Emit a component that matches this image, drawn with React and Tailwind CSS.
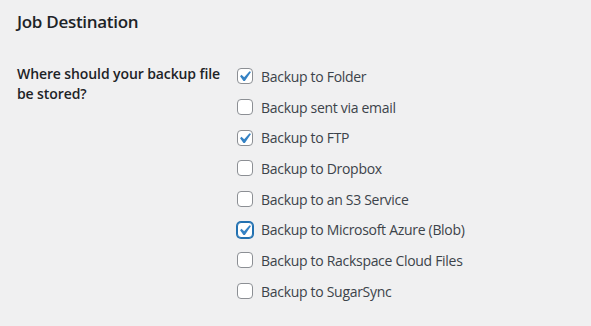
import { useState } from "react"

const DESTINATIONS = [
  { id: "folder",    label: "Backup to Folder",                checked: true },
  { id: "email",     label: "Backup sent via email",           checked: false },
  { id: "ftp",       label: "Backup to FTP",                   checked: true },
  { id: "dropbox",   label: "Backup to Dropbox",               checked: false },
  { id: "s3",        label: "Backup to an S3 Service",         checked: false },
  { id: "azure",     label: "Backup to Microsoft Azure (Blob)", checked: true, focus: true },
  { id: "rackspace", label: "Backup to Rackspace Cloud Files", checked: false },
  { id: "sugarsync", label: "Backup to SugarSync",             checked: false },
]

// ── WP-style checkbox ─────────────────────────────────────────────
function Checkbox({ checked, focus, onChange }) {
  return (
    <span
      onClick={onChange}
      className={
        "relative block h-4 w-4 shrink-0 rounded-[4px] bg-white cursor-pointer " +
        (focus ? "border border-[#2271b1] shadow-[0_0_0_1px_#2271b1]" : "border border-[#8c8f94]")
      }
    >
      {checked && (
        <svg viewBox="0 0 20 20" className="absolute -left-[4px] -top-[3px] h-[21px] w-[21px]">
          <path d="M14.83 4.89l1.34.94-5.81 8.38H9.02L5.78 9.67l1.34-1.25 2.57 2.4z" fill="#3582c4" />
        </svg>
      )}
    </span>
  )
}

export default function App() {
  const [items, setItems] = useState(DESTINATIONS)

  function toggle(id) {
    setItems(arr => arr.map(it => it.id === id ? { ...it, checked: !it.checked } : it))
  }

  return (
    <div className="h-[326px] w-[591px] bg-[#f0f0f1] pl-[17px] pt-[9px] font-['Segoe_UI','Open_Sans',sans-serif] text-[#3c434a]">
      <h2 className="text-[17px] font-semibold leading-[26px] tracking-[-0.3px] text-[#1d2327]">Job Destination</h2>

      <div className="mt-[26px] flex">
        <div className="w-[220px] pt-[3px] text-[14px] font-semibold leading-[20px] tracking-[-0.1px] text-[#1d2327]">
          Where should your backup file be stored?
        </div>
        <div className="flex flex-col">
          {items.map(it => (
            <label key={it.id} className="flex h-[30.7px] items-center gap-2 text-[14px] tracking-[-0.3px]">
              <Checkbox checked={it.checked} focus={it.focus} onChange={() => toggle(it.id)} />
              <span>{it.label}</span>
            </label>
          ))}
        </div>
      </div>
    </div>
  )
}
